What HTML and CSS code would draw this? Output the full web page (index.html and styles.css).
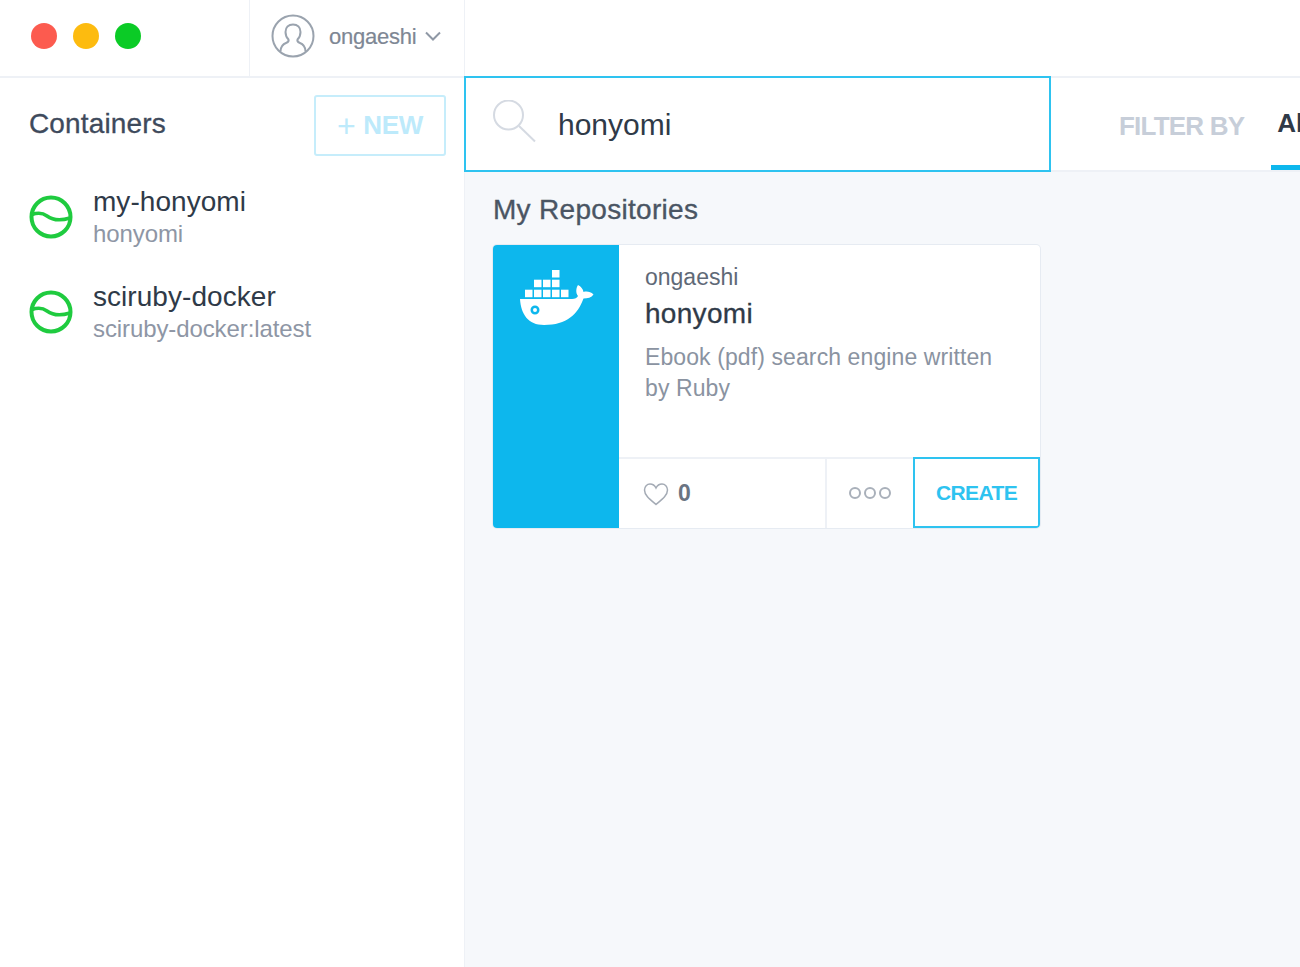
FILE: index.html
```html
<!DOCTYPE html>
<html lang="en">
<head>
<meta charset="utf-8">
<title>Kitematic</title>
<link rel="stylesheet" href="styles.css">
</head>
<body>
<div class="app">
  <aside class="sidebar">
    <header class="titlebar">
      <div class="lights">
        <span class="light red"></span>
        <span class="light yellow"></span>
        <span class="light green"></span>
      </div>
      <div class="user">
        <svg class="avatar" viewBox="0 0 44 44" width="44" height="44">
          <circle cx="22" cy="22" r="20.5" fill="none" stroke="#9aa3ae" stroke-width="2"/>
          <path d="M9.500 37.500c0-5 2.500-7.500 6-8.800 2-.8 2.500-1.700 2-3.200-2-2-3-4.500-3-7.500 0-4.500 3-7.500 7.500-7.500s7.500 3 7.500 7.500c0 3-1 5.500-3 7.500-.5 1.500 0 2.400 2 3.200 3.500 1.300 6 3.800 6 8.800" fill="none" stroke="#9aa3ae" stroke-width="2"/>
        </svg>
        <span class="user-name">ongaeshi</span>
        <svg class="chevron" viewBox="0 0 16 10" width="16" height="10">
          <path d="M1 1.500l7 7 7-7" fill="none" stroke="#8f98a5" stroke-width="2"/>
        </svg>
      </div>
    </header>
    <div class="side-head">
      <h2 class="side-title">Containers</h2>
      <button class="new-btn"><span class="plus">+</span>NEW</button>
    </div>
    <ul class="containers">
      <li class="container">
        <svg class="status" viewBox="0 0 44 44" width="44" height="44">
          <circle cx="22" cy="22" r="19.500" fill="none" stroke="#1fcb3f" stroke-width="4"/>
          <path d="M3 19.500C10 17 14 18 18 21S28 27 41 23" fill="none" stroke="#1fcb3f" stroke-width="3.500"/>
        </svg>
        <div class="container-text">
          <div class="container-name">my-honyomi</div>
          <div class="container-image">honyomi</div>
        </div>
      </li>
      <li class="container">
        <svg class="status" viewBox="0 0 44 44" width="44" height="44">
          <circle cx="22" cy="22" r="19.500" fill="none" stroke="#1fcb3f" stroke-width="4"/>
          <path d="M3 19.500C10 17 14 18 18 21S28 27 41 23" fill="none" stroke="#1fcb3f" stroke-width="3.500"/>
        </svg>
        <div class="container-text">
          <div class="container-name">sciruby-docker</div>
          <div class="container-image">sciruby-docker:latest</div>
        </div>
      </li>
    </ul>
  </aside>
  <main class="main">
    <div class="top-spacer"></div>
    <div class="toolbar">
      <div class="search">
        <svg class="search-icon" viewBox="0 0 44 44" width="44" height="44">
          <circle cx="15.500" cy="15" r="14.500" fill="none" stroke="#d5dae2" stroke-width="2"/>
          <path d="M26 26l16 15.500" fill="none" stroke="#d5dae2" stroke-width="2"/>
        </svg>
        <span class="search-text">honyomi</span>
      </div>
      <div class="filters">
        <span class="filter-label">FILTER BY</span>
        <span class="filter-tab">All</span>
      </div>
    </div>
    <section class="results">
      <h3 class="results-title">My Repositories</h3>
      <article class="card">
        <div class="card-logo">
          <svg class="whale" viewBox="0 0 76 60" width="76" height="60">
            <g fill="#fff">
              <rect x="32" y="1" width="7.500" height="7.500"/>
              <rect x="14" y="10.700" width="7.500" height="7.500"/>
              <rect x="23" y="10.700" width="7.500" height="7.500"/>
              <rect x="32" y="10.700" width="7.500" height="7.500"/>
              <rect x="5" y="20.700" width="7.500" height="7.500"/>
              <rect x="14" y="20.700" width="7.500" height="7.500"/>
              <rect x="23" y="20.700" width="7.500" height="7.500"/>
              <rect x="32" y="20.700" width="7.500" height="7.500"/>
              <rect x="41" y="20.700" width="7.500" height="7.500"/>
              <path fill-rule="evenodd" d="M0 30h52c3 0 5-1 6-3-2.500-3-2-8 0-11 3 1.500 5 4 5.500 7 3-1 7-.5 10 2.500-2 3-6 4-10 4C58 45 47 56 24 56 8 56 1 45 0 30zM15 36.500a4.500 4.500 0 1 0 0 9 4.500 4.500 0 0 0 0-9zm0 2.500a2 2 0 1 1 0 4 2 2 0 0 1 0-4z"/>
            </g>
          </svg>
        </div>
        <div class="card-body">
          <div class="card-info">
            <div class="card-owner">ongaeshi</div>
            <div class="card-name">honyomi</div>
            <p class="card-desc">Ebook (pdf) search engine written by Ruby</p>
          </div>
          <div class="card-actions">
            <div class="likes">
              <svg class="heart" viewBox="0 0 26 24" width="26" height="24">
                <path d="M13 22.500C7 17.500 1.500 13.500 1.500 8 1.500 4.500 4 2 7 2c2.500 0 4.800 1.500 6 4 1.200-2.500 3.500-4 6-4 3 0 5.500 2.500 5.500 6 0 5.500-5.500 9.500-11.500 14.500z" fill="none" stroke="#a4abb5" stroke-width="1.500"/>
              </svg>
              <span class="like-count">0</span>
            </div>
            <div class="more">
              <span class="dot"></span><span class="dot"></span><span class="dot"></span>
            </div>
            <button class="create-btn">CREATE</button>
          </div>
        </div>
      </article>
    </section>
  </main>
</div>
</body>
</html>
```

FILE: styles.css
```css
* { box-sizing: border-box; }
html, body { margin: 0; padding: 0; height: 100%; overflow: hidden; }
body { font-family: "Liberation Sans", Arial, sans-serif; background: #fff; color: #3b4552; }
h2, h3, p, ul { margin: 0; padding: 0; }
ul { list-style: none; }
button { font-family: inherit; background: #fff; cursor: pointer; }

.app { display: flex; width: 1300px; height: 967px; }

.sidebar { width: 465px; flex: none; border-right: 1px solid #eef1f6; background: #fff; }
.titlebar { display: flex; height: 78px; border-bottom: 2px solid #eef1f6; }
.lights { width: 250px; border-right: 1px solid #eef1f6; display: flex; align-items: center; gap: 16px; padding: 0 0 4px 31px; }
.light { width: 26px; height: 26px; border-radius: 50%; }
.red { background: #fc5b4f; }
.yellow { background: #fdbb0f; }
.green { background: #0bcb26; }
.user { flex: 1; display: flex; align-items: center; padding: 0 0 4px 21px; }
.user-name { font-size: 22px; color: #7e8794; margin: 2px 0 0 14px; letter-spacing: -.25px; -webkit-text-stroke: .2px #7e8794; }
.chevron { margin-left: 9px; }

.side-head { display: flex; align-items: center; justify-content: space-between; padding: 17px 18px 0 29px; }
.side-title { font-size: 28px; font-weight: normal; color: #3e4a5c; letter-spacing: .15px; -webkit-text-stroke: .3px #3e4a5c; margin-bottom: 4px; }
.new-btn { width: 132px; height: 61px; border: 2px solid #c6edfb; border-radius: 3px; color: #bdeafb; font-size: 26px; font-weight: bold; padding: 0; display: flex; align-items: center; justify-content: center; letter-spacing: -.3px; }
.plus { font-weight: normal; font-size: 32px; margin-right: 8px; line-height: 1; }

.containers { margin-top: 13px; }
.container { display: flex; align-items: center; height: 95px; padding-left: 29px; }
.status { flex: none; }
.container-text { margin-left: 20px; }
.container-name { font-size: 28px; color: #2f3a48; line-height: 34px; letter-spacing: .05px; }
.container-image { font-size: 24px; color: #8e96a5; line-height: 30px; letter-spacing: -.1px; }

.main { flex: 1; min-width: 0; display: flex; flex-direction: column; background: #f6f8fb; }
.top-spacer { height: 76px; flex: none; background: #fff; }
.toolbar { display: flex; height: 96px; flex: none; margin-left: -1px; }
.search { width: 587px; flex: none; border: 2px solid #2ec3f0; display: flex; align-items: center; padding-left: 27px; background: #fff; }
.search-icon { flex: none; margin-bottom: 4px; }
.search-text { font-size: 30px; color: #2f3a48; margin-left: 21px; position: relative; top: 1px; }
.filters { flex: 1; min-width: 0; display: flex; background: #fff; border-top: 2px solid #eef1f6; border-bottom: 2px solid #eef1f6; align-items: center; padding-left: 68px; overflow: hidden; }
.filter-label { font-size: 26px; font-weight: bold; color: #c7ced9; white-space: nowrap; letter-spacing: -.8px; padding-top: 4px; }
.filter-tab { flex: none; width: 60px; margin-left: 27px; padding: 4px 0 0 6px; font-size: 26px; font-weight: bold; color: #2f3a48; align-self: stretch; display: flex; align-items: center; border-bottom: 5px solid #0db7ed; }

.results { padding: 20px 28px; }
.results-title { font-size: 28px; font-weight: normal; color: #4a5563; line-height: 36px; -webkit-text-stroke: .35px #4a5563; letter-spacing: .3px; }
.card { display: flex; width: 547px; height: 283px; margin-top: 17px; border-radius: 4px; overflow: hidden; background: #fff; box-shadow: 0 0 0 1px #e6ebf2; }
.card-logo { width: 126px; flex: none; background: #0db7ed; padding: 24px 0 0 27px; }
.whale { display: block; }
.card-body { flex: 1; display: flex; flex-direction: column; min-width: 0; }
.card-info { flex: 1; padding: 16px 30px 0 26px; }
.card-owner { font-size: 23px; color: #5f6977; line-height: 32px; }
.card-name { font-size: 28px; color: #2f3a48; line-height: 38px; -webkit-text-stroke: .3px #2f3a48; letter-spacing: .3px; margin-top: 2px; }
.card-desc { font-size: 23px; color: #8a93a1; line-height: 31px; margin-top: 9px; letter-spacing: .1px; }
.card-actions { display: flex; height: 71px; flex: none; border-top: 2px solid #eef1f6; }
.likes { width: 208px; flex: none; display: flex; align-items: center; padding-left: 24px; border-right: 2px solid #eef1f6; }
.like-count { font-size: 23px; color: #6a7482; font-weight: bold; margin-left: 9px; }
.more { width: 86px; flex: none; display: flex; align-items: center; justify-content: center; gap: 3px; padding-bottom: 1px; }
.dot { width: 12px; height: 12px; border: 2px solid #a9b0ba; border-radius: 50%; }
.create-btn { flex: 1; border: 2px solid #2ec3f0; border-radius: 0 0 3px 0; color: #2ec3f0; font-size: 21px; font-weight: bold; padding: 0; margin-top: -2px; letter-spacing: -.6px; }
```
